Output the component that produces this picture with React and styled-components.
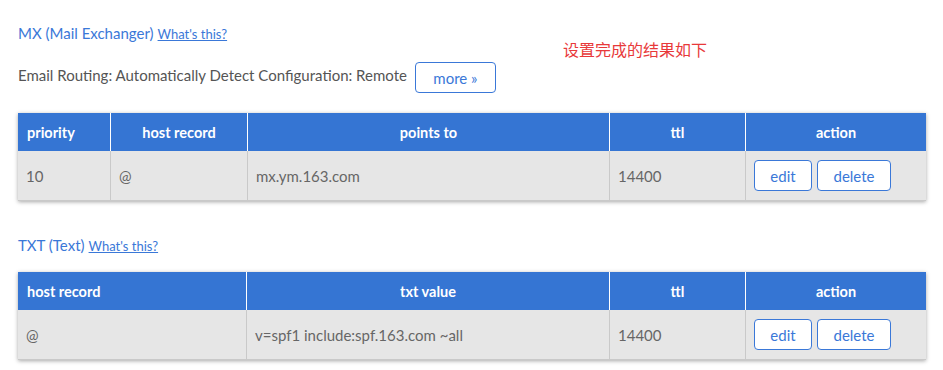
import React from "react";
import styled, { createGlobalStyle } from "styled-components";

const Global = createGlobalStyle`
  html, body { margin: 0; padding: 0; background: #fff; }
  body { font-family: Lato, "Open Sans", "Noto Sans", sans-serif; }
`;

const Page = styled.div`
  width: 943px;
  height: 370px;
  box-sizing: border-box;
  padding: 22px 17px 0 18px;
  position: relative;
  overflow: hidden;
`;

const Section = styled.section`
  margin-bottom: ${(p) => p.$mb || 0}px;
`;

const Heading = styled.div`
  font-size: 15px;
  line-height: 22px;
  color: #3a78d8;
  display: flex;
  align-items: baseline;
  gap: 4px;
`;

const Help = styled.a`
  font-size: 13px;
  color: #3a78d8;
  text-decoration: underline;
  cursor: pointer;
`;

const InfoRow = styled.div`
  display: flex;
  align-items: center;
  gap: 8px;
  margin-top: 17px;
  margin-bottom: 20px;
  font-size: 15px;
  color: #555;
`;

const InfoText = styled.span`
  position: relative;
  top: -3px;
`;

const Note = styled.div`
  position: absolute;
  left: 563px;
  top: 37px;
  font-family: "Noto Sans CJK SC", sans-serif;
  font-size: 16px;
  color: #e8393a;
`;

const Btn = styled.button`
  font-family: inherit;
  font-size: 15px;
  color: #3a78d8;
  background: #fff;
  border: 1px solid #3a78d8;
  border-radius: 4px;
  height: 31px;
  width: ${(p) => p.$w}px;
  padding: 0;
  cursor: pointer;
`;

const Table = styled.div`
  display: grid;
  grid-template-columns: ${(p) => p.$cols};
  width: 908px;
  margin-top: ${(p) => p.$mt || 0}px;
  box-shadow: 0 1px 4px rgba(0, 0, 0, 0.35);
`;

const Th = styled.div`
  background: #3575d3;
  color: #fff;
  font-size: 14.5px;
  font-weight: 700;
  height: 38px;
  display: flex;
  align-items: center;
  justify-content: ${(p) => (p.$left ? "flex-start" : "center")};
  padding: 0 9px;
  border-left: ${(p) => (p.$first ? "none" : "1px solid #fff")};
  box-sizing: border-box;
`;

const Td = styled.div`
  background: #e6e6e6;
  color: #666;
  font-size: 15px;
  height: 50px;
  display: flex;
  align-items: center;
  gap: 5px;
  padding: 0 8px;
  border-left: ${(p) => (p.$first ? "none" : "1px solid #c9c9c9")};
  border-bottom: 1px solid #c9c9c9;
  box-sizing: border-box;
`;

const Actions = () => (
  <>
    <Btn $w={58}>edit</Btn>
    <Btn $w={74}>delete</Btn>
  </>
);

export default function App() {
  return (
    <Page>
      <Global />
      <Note>设置完成的结果如下</Note>
      <Section $mb={33}>
        <Heading>
          MX (Mail Exchanger) <Help>What's this?</Help>
        </Heading>
        <InfoRow>
          <InfoText>Email Routing: Automatically Detect Configuration: Remote</InfoText>
          <Btn $w={81}>more »</Btn>
        </InfoRow>
        <Table $cols="92px 137px 362px 136px 181px">
          <Th $first $left>priority</Th>
          <Th>host record</Th>
          <Th>points to</Th>
          <Th>ttl</Th>
          <Th>action</Th>
          <Td $first>10</Td>
          <Td>@</Td>
          <Td>mx.ym.163.com</Td>
          <Td>14400</Td>
          <Td><Actions /></Td>
        </Table>
      </Section>
      <Section>
        <Heading>
          TXT (Text) <Help>What's this?</Help>
        </Heading>
        <Table $cols="228px 363px 136px 181px" $mt={15}>
          <Th $first $left>host record</Th>
          <Th>txt value</Th>
          <Th>ttl</Th>
          <Th>action</Th>
          <Td $first>@</Td>
          <Td>v=spf1 include:spf.163.com ~all</Td>
          <Td>14400</Td>
          <Td><Actions /></Td>
        </Table>
      </Section>
    </Page>
  );
}
